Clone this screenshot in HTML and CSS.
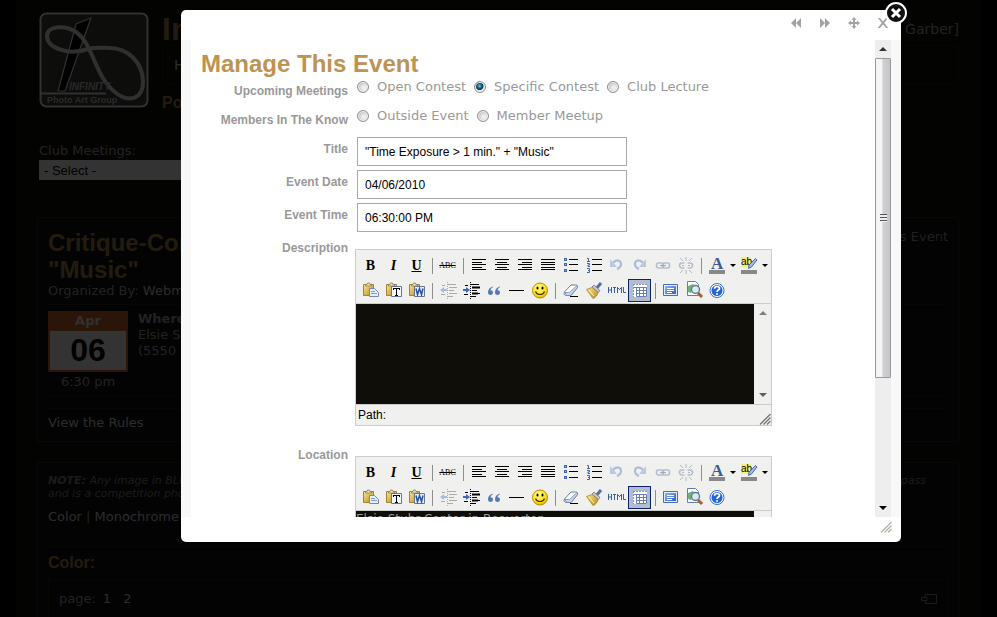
FILE: index.html
```html
<!DOCTYPE html>
<html lang="en">
<head>
<meta charset="utf-8">
<title>Manage This Event</title>
<link rel="stylesheet" href="styles.css">
</head>
<body>
<svg class="sprite" aria-hidden="true">
  <defs>
    <linearGradient id="gold" x1="0" y1="0" x2="1" y2="1"><stop offset="0" stop-color="#fbe78f"/><stop offset="1" stop-color="#b98a1c"/></linearGradient>
    <radialGradient id="face" cx=".4" cy=".3" r=".8"><stop offset="0" stop-color="#fffb8a"/><stop offset=".6" stop-color="#fbe21b"/><stop offset="1" stop-color="#d9a300"/></radialGradient>
    <linearGradient id="blue" x1="0" y1="0" x2="1" y2="1"><stop offset="0" stop-color="#8fb4f4"/><stop offset="1" stop-color="#2a5fd0"/></linearGradient>
    <g id="clipboard"><path d="M3.500 4.500h10v11h-10z" fill="url(#gold)" stroke="#a5822c"/><path d="M5.500 6V4.500h1.500l.5-1.500h2l.5 1.500h1.500V6z" fill="#e9e4cf" stroke="#8a7a4a" stroke-width=".8"/></g>
    <g id="lines-step" stroke="currentColor"><path d="M10 4.500h9M12 7.500h8M12 10.500h5M12 13.500h8M5 5.500h3M4 14.500h4M10 16.500h6"/><path d="M10.500 2v17" stroke-dasharray="1 1"/></g>
  </defs>
  <symbol id="i-left" viewBox="0 0 21 21"><path d="M4 4h14v1H4zM4 7h10v1H4zM4 9h14v1H4zM4 12h10v1H4zM4 14h14v1H4z"/></symbol>
  <symbol id="i-center" viewBox="0 0 21 21"><path d="M4 4h14v1H4zM6 7h10v1H6zM4 9h14v1H4zM6 12h10v1H6zM4 14h14v1H4z"/></symbol>
  <symbol id="i-right" viewBox="0 0 21 21"><path d="M4 4h14v1H4zM8 7h10v1H8zM4 9h14v1H4zM8 12h10v1H8zM4 14h14v1H4z"/></symbol>
  <symbol id="i-full" viewBox="0 0 21 21"><path d="M4 4h14v1H4zM4 7h14v1H4zM4 9h14v1H4zM4 12h14v1H4zM4 14h14v1H4z"/></symbol>
  <symbol id="i-bullets" viewBox="0 0 21 21"><path d="M9 4h9v1H9zM9 9h9v1H9zM9 15h9v1H9z"/><path fill="#3f66ad" d="M4 3h3v3H4zM4 8h3v3H4zM4 14h3v3H4z"/><path fill="#9fb6dd" d="M5 4h1v1H5zM5 9h1v1H5zM5 15h1v1H5z"/></symbol>
  <symbol id="i-numbers" viewBox="0 0 21 21"><path d="M9 4h10v1H9zM9 9h10v1H9zM9 15h10v1H9z"/><path fill="none" stroke="#3f66ad" d="M4 3.500h1.500V6M4 6.500h3M4 8.500h2.500v1.500H5v1.500h2M4 13.500h2.500v4H4M5 15.500h2"/></symbol>
  <symbol id="i-undo" viewBox="0 0 21 21"><path fill="none" stroke="#a9bcdd" stroke-width="2.200" d="M7 8c3-4 8-3 8 1 0 2.500-1.500 4-4 5"/><path fill="#b9c9e4" d="M4 4v8h7z"/></symbol>
  <symbol id="i-redo" viewBox="0 0 21 21"><path fill="none" stroke="#a9bcdd" stroke-width="2.200" d="M14 8c-3-4-8-3-8 1 0 2.500 1.500 4 4 5"/><path fill="#b9c9e4" d="M17 4v8h-7z"/></symbol>
  <symbol id="i-link" viewBox="0 0 21 21"><g fill="none" stroke="#b4bdd0" stroke-width="1.600"><rect x="4.500" y="8" width="7" height="5" rx="2"/><rect x="10.500" y="8" width="7" height="5" rx="2"/></g><path stroke="#9ea8bc" d="M8 10.500h6"/></symbol>
  <symbol id="i-unlink" viewBox="0 0 21 21"><g fill="none" stroke="#b4bdd0" stroke-width="1.600"><path d="M9.500 8H7a2.500 2.500 0 0 0 0 5h2.500M12.500 8H15a2.500 2.500 0 0 1 0 5h-2.500"/></g><path fill="none" stroke="#b4b8c0" d="M7 10.500h2M13 10.500h2M11 6V2M8 6L5 3M14 6l3-3M11 15v4M8 15l-3 3M14 15l3 3"/></symbol>
  <symbol id="i-paste" viewBox="0 0 21 21"><use href="#clipboard"/><path fill="#e8effb" stroke="#7289b5" d="M9.500 8.500h5l4 4v4h-9z"/><path stroke="#7f9bd2" d="M11 11.500h4M11 13.500h6"/></symbol>
  <symbol id="i-paste-text" viewBox="0 0 21 21"><use href="#clipboard"/><path fill="#f4f7fc" stroke="#667691" d="M8.500 6.500h10v10h-10z"/><path d="M10 8h7v2h-1V9h-2v6h1v1h-3v-1h1V9h-2v1h-1z"/></symbol>
  <symbol id="i-paste-word" viewBox="0 0 21 21"><use href="#clipboard"/><path fill="#e3edfc" stroke="#667691" d="M8.500 6.500h10v10h-10z"/><path fill="none" stroke="#2853a8" stroke-width="1.500" d="M10 8.500l1.500 6 2-6 2 6 1.500-6"/></symbol>
  <symbol id="i-outdent" viewBox="0 0 21 21"><g color="#aaa"><use href="#lines-step"/></g><path fill="#a9bbdc" d="M3 10l4-3v2h3v2H7v2z"/></symbol>
  <symbol id="i-indent" viewBox="0 0 21 21"><g color="#000"><use href="#lines-step"/><path stroke="#000" stroke-width="2" d="M12 7.500h8M12 13.500h6"/></g><path fill="#3d69b8" d="M10 10L6 7v2H3v2h3v2z"/></symbol>
  <symbol id="i-quote" viewBox="0 0 21 21"><path fill="#5678b2" d="M10 6.500C6.500 7.500 5 9.500 5 12.500c0 1.500 1 2.500 2.500 2.500S10 14 10 12.500 9 10.300 7.500 10.300C7.800 9 8.500 8 10 7.300zM17 6.500c-3.500 1-5 3-5 6 0 1.500 1 2.500 2.500 2.500s2.500-1 2.500-2.500-1-2.200-2.500-2.200c.3-1.300 1-2.300 2.500-3z"/></symbol>
  <symbol id="i-hr" viewBox="0 0 21 21"><path d="M3 10h15v1H3z"/></symbol>
  <symbol id="i-smile" viewBox="0 0 21 21"><circle cx="11" cy="10.500" r="7.500" fill="url(#face)" stroke="#b98d00"/><ellipse cx="8.500" cy="8" rx="1" ry="1.600"/><ellipse cx="13.500" cy="8" rx="1" ry="1.600"/><path fill="none" stroke="#4a3500" stroke-width="1.200" d="M6.500 11.500c1.500 4 7.500 4 9 0"/></symbol>
  <symbol id="i-eraser" viewBox="0 0 21 21"><path fill="#fff" stroke="#6a7d9d" d="M4.500 12l6.500-7h4.500c1.800 0 2.500 1 2 2.500L11 15.500H6.500c-2 0-3-1.500-2-3.500z"/><path fill="#c9d8f1" stroke="#6a7d9d" stroke-width=".7" d="M5 12.500h4.500l7.500-7 .5 2L11 15.500H6.500z"/><path d="M10 16h8v1h-8z"/></symbol>
  <symbol id="i-broom" viewBox="0 0 21 21"><path stroke="#55709f" stroke-width="3" d="M13 9l5-6"/><path fill="#c5c9d2" stroke="#6f7682" stroke-width=".8" d="M9 7l2-2 6 5.500-1.500 2z"/><path fill="url(#gold)" stroke="#a7822a" stroke-width=".8" d="M9 7.500L3.500 9.500 10 18.500c3-1 4.500-3.500 5-6z"/><path stroke="#fff3b5" d="M6 10l5 6"/></symbol>
  <symbol id="i-html" viewBox="0 0 21 21"><path fill="none" stroke="#3a5f9f" d="M2.500 7v6M5.500 7v6M3 10h2M7 7.500h3M8.500 7v6M11.500 13V7M12 8.500h1M13 9.500h1M14 8.500h1M15.500 7v6M17.500 7v5.500H20"/></symbol>
  <symbol id="i-table" viewBox="0 0 21 21"><path fill="#fff" d="M4 4h14v13H4z"/><path fill="none" stroke="#8296bb" stroke-dasharray="2 1" d="M4 4.500h14M4.500 4v13"/><path fill="none" stroke="#6480b2" d="M7.500 7v9.500h10V7.500H5M7.500 10.500H18M7.500 13.500H18M10.500 7.500v9M14.500 7.500v9"/></symbol>
  <symbol id="i-screen" viewBox="0 0 21 21"><path fill="#e6eefc" stroke="#4b6caf" d="M3.500 4.500h14v11h-14z"/><path fill="url(#blue)" d="M5 6h11v8H5z"/><path stroke="#fff" d="M7 8.500h7M7 10.500h7M7 12.500h5"/></symbol>
  <symbol id="i-preview" viewBox="0 0 21 21"><path fill="#fff" stroke="#5e7fb5" d="M4.500 1.500h8l3 3v11h-11z"/><path fill="#6faf84" d="M5 6l5-2 2 3-4 6-3-1z"/><path stroke="#a85f22" stroke-width="3" d="M15 13l4 4"/><circle cx="12.500" cy="9.500" r="4" fill="#d7ecf2" stroke="#67778b" stroke-width="1.400"/></symbol>
  <symbol id="i-help" viewBox="0 0 21 21"><circle cx="11" cy="10.500" r="7" fill="#fff" stroke="#356bd0"/><circle cx="11" cy="10.500" r="5.500" fill="#2864d8"/><path fill="none" stroke="#fff" stroke-width="1.700" d="M8.500 8.800c0-3 5-3 5-.3 0 1.600-2.500 1.500-2.500 3.500"/><circle cx="11" cy="14" r="1" fill="#fff"/></symbol>
  <symbol id="i-grip" viewBox="0 0 12 12"><path fill="none" stroke="currentColor" stroke-width="1.300" d="M1 11.500L11.500 1M4.500 11.500l7-7M8 11.500L11.500 8"/></symbol>
</svg>

<div class="page">
  <header class="masthead">
    <svg class="logo" viewBox="0 0 110 96" role="img" aria-label="Infinity Photo Art Group">
      <rect x="1.500" y="1.500" width="107" height="93" rx="6" fill="#40403a" stroke="#fff" stroke-opacity=".95" stroke-width="2"/>
      <path fill="#000" stroke="#f0f0f0" stroke-width="1.200" d="M37 12l15-6-26 73h-7z"/>
      <path fill="none" stroke="#f0f0f0" stroke-width="4" d="M49 37C30 44 8 36 8 24 8 13 27 13 37 20c18 13 18 44 40 61 13 10 27 6 27-11 0-20-16-34-33-34-8 0-15-1-22 1z"/>
      <path stroke="#f0f0f0" stroke-width="2" d="M1 81.500h66"/>
      <text x="30" y="78" class="logo-name">INFINITY</text>
      <text x="8" y="91" class="logo-sub">Photo Art Group</text>
    </svg>
    <div class="brand">
      <div class="brand-top"><h1>Infinity</h1><span>Garber]</span></div>
      <nav><a href="#">Home</a></nav>
      <h2>Portland</h2>
    </div>
  </header>

  <div class="picker">
    <label for="meetings">Club Meetings:</label>
    <select id="meetings"><option>- Select -</option></select>
  </div>

  <section class="card">
    <div class="card-head">
      <h2>Critique-Contest<br>"Music"</h2>
      <a href="#">Manage This Event</a>
    </div>
    <p>Organized By: <a href="#">Webmaster</a></p>
    <div class="when">
      <div class="date"><div class="leaf"><b>Apr</b><strong>06</strong></div>6:30 pm</div>
      <div><b>Where:</b><br>Elsie Stuhr<br>(5550 SW)</div>
    </div>
    <div class="rules"><a href="#">View the Rules</a></div>
  </section>

  <section class="card gallery">
    <div class="note"><p><b>NOTE:</b> Any image in BLUE<br>and is a competition photo</p><p>pass</p></div>
    <p class="kinds"><a href="#">Color</a> | <a href="#">Monochrome</a></p>
    <h3>Color:</h3>
    <div class="pager"><span>page:</span><a href="#">1</a><a href="#">2</a>
      <svg viewBox="0 0 16 10" aria-hidden="true"><path fill="none" stroke="#888" d="M4 3.500V.5h11.500v9H4V7M6 3.500H.5v3H6z"/></svg></div>
  </section>
</div>

<div class="shade">
  <div class="dialog" role="dialog" aria-labelledby="dialog-title">
    <div class="controls">
      <button type="button" aria-label="Previous"><svg viewBox="0 0 12 12"><path d="M6 1v10L1 6zM11 1v10L6 6z"/></svg></button>
      <button type="button" aria-label="Next"><svg viewBox="0 0 12 12"><path d="M1 1v10l5-5zM6 1v10l5-5z"/></svg></button>
      <button type="button" aria-label="Move"><svg viewBox="0 0 12 12"><path d="M6 0l2.500 3H7v2h2V3.500L12 6 9 8.500V7H7v2h1.500L6 12 3.500 9H5V7H3v1.500L0 6l3-2.500V5h2V3H3.500z"/></svg></button>
      <button type="button" aria-label="Dismiss"><svg viewBox="0 0 12 12"><path d="M1 1h2l3 3.500L9 1h2L7.300 6l4 5h-2L6 7.500 2.700 11h-2l4-5z"/></svg></button>
    </div>
    <button type="button" class="close" aria-label="Close"><svg viewBox="0 0 24 24"><circle cx="12" cy="12" r="10" fill="#111" stroke="#fff" stroke-width="2"/><path stroke="#fff" stroke-width="3" d="M8 8l8 8M16 8l-8 8"/></svg></button>

    <div class="viewport">
      <form>
        <h2 id="dialog-title">Manage This Event</h2>
        <div class="row short" role="radiogroup" aria-labelledby="g1">
          <span class="caption" id="g1">Upcoming Meetings</span>
          <div class="choices">
            <label><input type="radio" name="kind">Open Contest</label>
            <label><input type="radio" name="kind" checked>Specific Contest</label>
            <label><input type="radio" name="kind">Club Lecture</label>
          </div>
        </div>
        <div class="row short" role="radiogroup" aria-labelledby="g2">
          <span class="caption" id="g2">Members In The Know</span>
          <div class="choices">
            <label><input type="radio" name="kind">Outside Event</label>
            <label><input type="radio" name="kind">Member Meetup</label>
          </div>
        </div>
        <div class="row"><label class="caption" for="title">Title</label><input class="field" id="title" type="text" value='"Time Exposure &gt; 1 min." + "Music"'></div>
        <div class="row"><label class="caption" for="date">Event Date</label><input class="field" id="date" type="text" value="04/06/2010"></div>
        <div class="row"><label class="caption" for="time">Event Time</label><input class="field" id="time" type="text" value="06:30:00 PM"></div>

        <div class="row">
          <label class="caption" for="description">Description</label>
          <div class="editor">
            <div class="tools">
              <div class="bar">
                <button type="button" class="t b">B</button><button type="button" class="t i">I</button><button type="button" class="t u">U</button><i class="sep"></i>
                <button type="button" class="t abc">ABC</button><i class="sep"></i>
                <button type="button" aria-label="Align left"><svg><use href="#i-left"/></svg></button><button type="button" aria-label="Align center"><svg><use href="#i-center"/></svg></button><button type="button" aria-label="Align right"><svg><use href="#i-right"/></svg></button><button type="button" aria-label="Justify"><svg><use href="#i-full"/></svg></button><button type="button" aria-label="Bullets"><svg><use href="#i-bullets"/></svg></button><button type="button" aria-label="Numbering"><svg><use href="#i-numbers"/></svg></button><button type="button" aria-label="Undo"><svg><use href="#i-undo"/></svg></button><button type="button" aria-label="Redo"><svg><use href="#i-redo"/></svg></button><button type="button" aria-label="Link"><svg><use href="#i-link"/></svg></button><button type="button" aria-label="Unlink"><svg><use href="#i-unlink"/></svg></button><i class="sep"></i>
                <button type="button" aria-label="Text color"><svg viewBox="0 0 21 21"><text x="5" y="14" class="glyph-a">A</text><path fill="#888" d="M3 15h16v4H3z"/></svg></button><button type="button" class="drop" aria-label="Text colors"></button><button type="button" aria-label="Highlight"><svg viewBox="0 0 21 21"><path fill="#f4ee7c" d="M3 2h10v10H3z"/><text x="3" y="10" class="glyph-ab">ab</text><path fill="#9dbcf0" stroke="#2e4f8f" stroke-width=".8" d="M17.500 3.500L19 5l-5.500 7-3 1.500.5-3.500z"/><path fill="#888" d="M3 15h16v4H3z"/></svg></button><button type="button" class="drop" aria-label="Highlight colors"></button>
              </div>
              <div class="bar">
                <button type="button" aria-label="Paste"><svg><use href="#i-paste"/></svg></button><button type="button" aria-label="Paste text"><svg><use href="#i-paste-text"/></svg></button><button type="button" aria-label="Paste from Word"><svg><use href="#i-paste-word"/></svg></button><i class="sep"></i>
                <button type="button" aria-label="Outdent"><svg><use href="#i-outdent"/></svg></button><button type="button" aria-label="Indent"><svg><use href="#i-indent"/></svg></button><button type="button" aria-label="Quote"><svg><use href="#i-quote"/></svg></button><button type="button" aria-label="Rule"><svg><use href="#i-hr"/></svg></button><button type="button" aria-label="Smiley"><svg><use href="#i-smile"/></svg></button><i class="sep"></i>
                <button type="button" aria-label="Remove formatting"><svg><use href="#i-eraser"/></svg></button><button type="button" aria-label="Clean up"><svg><use href="#i-broom"/></svg></button><button type="button" aria-label="HTML"><svg><use href="#i-html"/></svg></button><button type="button" class="on" aria-label="Guidelines"><svg><use href="#i-table"/></svg></button><i class="sep"></i>
                <button type="button" aria-label="Full screen"><svg><use href="#i-screen"/></svg></button><button type="button" aria-label="Preview"><svg><use href="#i-preview"/></svg></button><button type="button" aria-label="Help"><svg><use href="#i-help"/></svg></button>
              </div>
            </div>
            <div class="canvas"><textarea id="description"></textarea><div class="gutter"><i class="up"></i><i class="down"></i></div></div>
            <div class="status">Path:<svg><use href="#i-grip"/></svg></div>
          </div>
        </div>

        <div class="row">
          <label class="caption" for="location">Location</label>
          <div class="editor">
            <div class="tools">
              <div class="bar">
                <button type="button" class="t b">B</button><button type="button" class="t i">I</button><button type="button" class="t u">U</button><i class="sep"></i>
                <button type="button" class="t abc">ABC</button><i class="sep"></i>
                <button type="button" aria-label="Align left"><svg><use href="#i-left"/></svg></button><button type="button" aria-label="Align center"><svg><use href="#i-center"/></svg></button><button type="button" aria-label="Align right"><svg><use href="#i-right"/></svg></button><button type="button" aria-label="Justify"><svg><use href="#i-full"/></svg></button><button type="button" aria-label="Bullets"><svg><use href="#i-bullets"/></svg></button><button type="button" aria-label="Numbering"><svg><use href="#i-numbers"/></svg></button><button type="button" aria-label="Undo"><svg><use href="#i-undo"/></svg></button><button type="button" aria-label="Redo"><svg><use href="#i-redo"/></svg></button><button type="button" aria-label="Link"><svg><use href="#i-link"/></svg></button><button type="button" aria-label="Unlink"><svg><use href="#i-unlink"/></svg></button><i class="sep"></i>
                <button type="button" aria-label="Text color"><svg viewBox="0 0 21 21"><text x="5" y="14" class="glyph-a">A</text><path fill="#888" d="M3 15h16v4H3z"/></svg></button><button type="button" class="drop" aria-label="Text colors"></button><button type="button" aria-label="Highlight"><svg viewBox="0 0 21 21"><path fill="#f4ee7c" d="M3 2h10v10H3z"/><text x="3" y="10" class="glyph-ab">ab</text><path fill="#9dbcf0" stroke="#2e4f8f" stroke-width=".8" d="M17.500 3.500L19 5l-5.500 7-3 1.500.5-3.500z"/><path fill="#888" d="M3 15h16v4H3z"/></svg></button><button type="button" class="drop" aria-label="Highlight colors"></button>
              </div>
              <div class="bar">
                <button type="button" aria-label="Paste"><svg><use href="#i-paste"/></svg></button><button type="button" aria-label="Paste text"><svg><use href="#i-paste-text"/></svg></button><button type="button" aria-label="Paste from Word"><svg><use href="#i-paste-word"/></svg></button><i class="sep"></i>
                <button type="button" aria-label="Outdent"><svg><use href="#i-outdent"/></svg></button><button type="button" aria-label="Indent"><svg><use href="#i-indent"/></svg></button><button type="button" aria-label="Quote"><svg><use href="#i-quote"/></svg></button><button type="button" aria-label="Rule"><svg><use href="#i-hr"/></svg></button><button type="button" aria-label="Smiley"><svg><use href="#i-smile"/></svg></button><i class="sep"></i>
                <button type="button" aria-label="Remove formatting"><svg><use href="#i-eraser"/></svg></button><button type="button" aria-label="Clean up"><svg><use href="#i-broom"/></svg></button><button type="button" aria-label="HTML"><svg><use href="#i-html"/></svg></button><button type="button" class="on" aria-label="Guidelines"><svg><use href="#i-table"/></svg></button><i class="sep"></i>
                <button type="button" aria-label="Full screen"><svg><use href="#i-screen"/></svg></button><button type="button" aria-label="Preview"><svg><use href="#i-preview"/></svg></button><button type="button" aria-label="Help"><svg><use href="#i-help"/></svg></button>
              </div>
            </div>
            <div class="canvas"><textarea id="location">Elsie Stuhr Center in Beaverton</textarea><div class="gutter"><i class="up"></i><i class="down"></i></div></div>
          </div>
        </div>
      </form>
      <div class="scroll" aria-hidden="true">
        <i class="up"></i><div class="thumb"><i></i></div><i class="down"></i>
      </div>
    </div>
    <div class="foot"><svg><use href="#i-grip"/></svg></div>
  </div>
</div>
</body>
</html>
```
FILE: styles.css
```css
* { box-sizing: border-box; }
html, body { height: 100%; }
body {
  margin: 0;
  padding: 0 16px;
  overflow: hidden;
  background: #000;
  color: #aaa;
  font: 13px/16px "DejaVu Sans", Verdana, sans-serif;
}
h1, h2, h3, p { margin: 0; }
a { color: #d8d8d8; text-decoration: none; }
button { padding: 0; border: 0; background: none; cursor: pointer; }
.sprite { position: absolute; width: 0; height: 0; }

.page { height: 100%; padding: 12px 22px 0 21px; overflow: hidden; background: #11100b; }
.page h1, .page h2, .page h3 { color: #b3884c; font-family: "Liberation Sans", Arial, sans-serif; }

.masthead { display: flex; gap: 13px; padding: 0 0 0 2px; }
.logo { flex: none; width: 110px; height: 96px; }
.logo-name { fill: #c8c8c8; font: italic bold 10px "Liberation Sans", sans-serif; }
.logo-sub { fill: #d0d0d0; font: bold 9px "Liberation Sans", sans-serif; }
.brand { flex: 1; }
.brand-top { display: flex; justify-content: space-between; align-items: center; height: 33px; font-size: 14px; }
.brand h1 { font-size: 32px; line-height: 32px; }
.brand nav { height: 39px; padding: 11px; border: 1px solid #24221c; font-size: 14px; }
.brand h2 { padding-top: 10px; font-size: 16px; line-height: 18px; }

.picker { display: flex; flex-direction: column; align-items: flex-start; padding: 30px 0 37px 2px; line-height: 18px; }
.picker select {
  width: 240px; height: 20px; padding: 0 5px; border: 0; border-radius: 0;
  appearance: none; background: #fff; color: #000;
  font: 13px "Liberation Sans", Arial, sans-serif;
}

.card { margin-bottom: 20px; padding: 11px 10px 10px; border: 1px solid #2b2820; background: #0f0f10; }
.card-head { display: flex; justify-content: space-between; line-height: 16px; }
.card h2 { font-size: 24px; line-height: 27px; }
.card-head a { color: #999; }
.when { display: flex; gap: 10px; margin: 5px 0 12px; padding: 6px 0 5px; border: solid #26241e; border-width: 1px 0; }
.date { width: 80px; text-align: center; }
.leaf { margin-bottom: 2px; border: 2px solid #e0702e; border-top: 0; background: #fff; color: #000; }
.leaf b { display: block; margin: 0 -2px; background: #d8642a; color: #eee; line-height: 20px; }
.leaf strong { display: block; font: bold 32px/39px "Liberation Sans", Arial, sans-serif; }
.rules { padding-top: 6px; border-top: 1px solid #26241e; }
.note { display: flex; justify-content: space-between; padding-right: 22px; color: #888; font-size: 11px; font-style: italic; line-height: 13px; }
.kinds { padding: 9px 0 21px; border-bottom: 1px solid #26241e; }
.card h3 { padding: 7px 0; font-size: 16px; line-height: 18px; }
.pager { display: flex; align-items: center; gap: 12px; height: 39px; padding: 0 10px; border: 1px solid #26241e; }
.pager span { margin-right: -5px; }
.pager svg { width: 16px; height: 10px; margin-left: auto; }

.shade { position: fixed; inset: 0; background: rgba(0, 0, 0, .8); }
.dialog {
  position: absolute; inset: 10px 96px 75px 181px;
  display: flex; flex-direction: column;
  border-radius: 5px; background: #fff; color: #999;
}
.controls { display: flex; flex: none; justify-content: flex-end; gap: 17px; height: 30px; padding: 0 12px 4px; }
.controls svg { display: block; width: 12px; height: 12px; fill: #a3a3a3; }
.close { position: absolute; top: -9px; right: -7px; width: 24px; height: 24px; }
.close svg { display: block; }
.viewport { display: flex; flex: 1; min-height: 0; border: solid #f8f8f8; border-width: 0 10px; overflow: hidden; }
form { flex: 1; padding: 11px 10px 0; }
form h2 { color: #bc9351; font: bold 24px/26px "Liberation Sans", Arial, sans-serif; }

.row { display: grid; grid-template-columns: 147px 1fr; column-gap: 9px; min-height: 33px; }
.row.short { min-height: 29px; }
.caption { text-align: right; font: bold 12px/29px "Liberation Sans", Arial, sans-serif; }
.choices { display: flex; gap: 8px; height: 20px; }
.choices label { display: flex; align-items: center; gap: 8px; }
.choices input {
  width: 12px; height: 12px; margin: 0; border: 1px solid #8e8f8f; border-radius: 50%;
  appearance: none; background: radial-gradient(circle at 60% 60%, #eee 20%, #bbb 75%);
  box-shadow: inset 0 0 0 1px #f4f4f4;
}
.choices input:checked { background: radial-gradient(circle at 45% 40%, #7fd0ea 0, #1c6487 25%, #12394f 45%, #e8e8e8 55%); }
.field {
  width: 270px; height: 29px; margin: 2px 0; padding: 0 7px; border: 1px solid #aaa;
  background: #fff; color: #000; font: 12px "Liberation Sans", Arial, sans-serif;
}

.editor { width: 417px; margin: 15px 0 15px -2px; border: 1px solid #ccc; background: #f0f0ee; }
.tools { padding: 3px 3px 0; border-bottom: 1px solid #ccc; }
.bar { display: flex; align-items: center; height: 25px; }
.bar button { display: flex; flex: none; align-items: center; justify-content: center; width: 23px; height: 23px; color: #000; }
.bar svg { width: 21px; height: 21px; }
.bar .t { font: bold 14px/20px "Liberation Serif", "Times New Roman", serif; }
.bar .i { font-style: italic; }
.bar .u { text-decoration: underline; }
.bar .abc { font-size: 8px; font-weight: normal; text-decoration: line-through; }
.bar .on { border: 1px solid #0a246a; background: #b2bbd0; }
.bar .drop { width: 9px; }
.drop::after, .down::after { content: ""; border: 3px solid transparent; border-top-color: #000; border-bottom: 0; }
.up::after { content: ""; border: 4px solid transparent; border-bottom-color: #333; border-top: 0; }
.sep { flex: none; width: 4px; height: 16px; margin-left: 4px; border-left: 1px solid #8e8e8e; }
.glyph-a { fill: #3d5c94; font: bold 17px "Liberation Serif", serif; }
.glyph-ab { fill: #000; font: 10px "Liberation Sans", sans-serif; }
.canvas { display: flex; height: 100px; }
.canvas textarea {
  flex: 1; min-width: 0; padding: 0; border: 0; resize: none; overflow: hidden;
  background: #0f0e09; color: #999; font: 12px/16px "DejaVu Sans", Verdana, sans-serif;
}
.gutter { display: flex; flex-direction: column; justify-content: space-between; width: 17px; background: #f0f0f0; opacity: .6; }
.gutter i, .scroll > i { display: flex; flex: none; align-items: center; justify-content: center; height: 18px; }
.down::after { border-width: 4px 4px 0; }
.status { display: flex; justify-content: space-between; align-items: center; height: 21px; padding-left: 2px; border-top: 1px solid #ccc; color: #000; font: 12px "Liberation Sans", Arial, sans-serif; }
.status svg { align-self: flex-end; width: 12px; height: 12px; color: #777; }

.scroll { display: flex; flex: none; flex-direction: column; width: 16px; background: #eee; }
.thumb {
  display: flex; align-items: center; justify-content: center; flex: 0 0 67%; margin-bottom: auto;
  border: 1px solid #999; border-radius: 1px; background: linear-gradient(90deg, #f5f5f5 40%, #d0d1d4 50%, #c4c5c8);
}
.thumb i { width: 7px; height: 8px; background: repeating-linear-gradient(#555 0 1px, #eee 1px 3px); }
.foot { display: flex; flex: none; justify-content: flex-end; height: 25px; padding: 4px 9px 0; }
.foot svg { width: 12px; height: 12px; color: #b5b0a4; }
```
